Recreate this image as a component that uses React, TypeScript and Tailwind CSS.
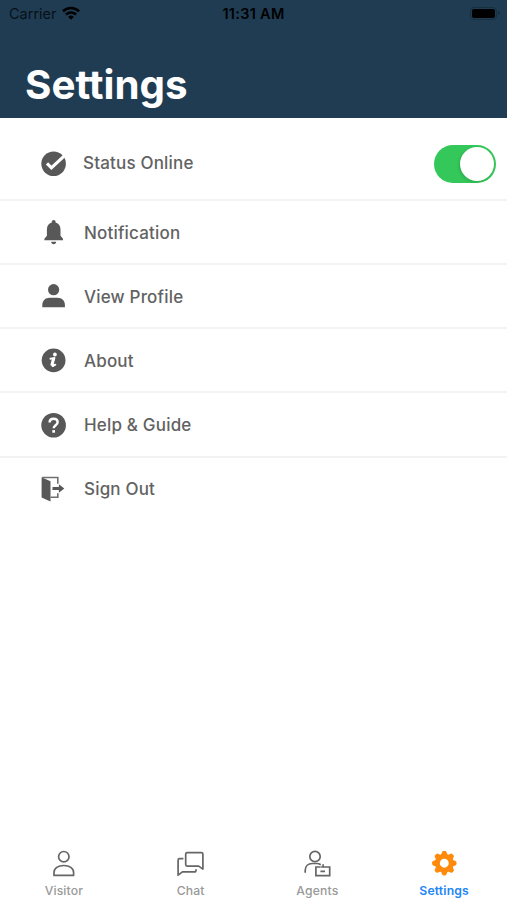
import { type ReactNode } from "react";
import clsx from "clsx";

const FONT = "font-[Inter,'Liberation_Sans',sans-serif]";

// Filled glyphs of the settings list, all on a 28px grid.
function RowIcon({ children }: { children: ReactNode }) {
  return (
    <svg viewBox="0 0 28 28" className="ml-[39.5px] size-7 shrink-0" fill="#585858" aria-hidden>
      {children}
    </svg>
  );
}

function StatusIcon() {
  return (
    <RowIcon>
      <circle cx="13.6" cy="13.7" r="12.3" />
      <path d="M7 13.4l4.400 4.400 12.900-12" fill="none" stroke="#fff" strokeWidth="3.2" />
    </RowIcon>
  );
}

function BellIcon() {
  return (
    <RowIcon>
      <path d="M13.700 2c1.100 0 1.900.8 1.900 1.900v.7c3.200.9 4.900 3.500 4.900 7v6.200l2.500 2.900v1.500H4.400v-1.500l2.500-2.900v-6.200c0-3.500 1.700-6.100 4.900-7v-.7c0-1.100.8-1.900 1.900-1.900z" />
      <path d="M11.200 23.700h5c0 1.500-1.100 2.500-2.500 2.500s-2.500-1-2.500-2.500z" />
    </RowIcon>
  );
}

function ProfileIcon() {
  return (
    <RowIcon>
      <circle cx="13.6" cy="7.700" r="5.600" />
      <path d="M2.300 25.300v-2.200c0-4.600 3.200-7.300 7.400-7.300h7.800c4.200 0 7.400 2.700 7.400 7.300v2.200z" />
    </RowIcon>
  );
}

function AboutIcon() {
  return (
    <RowIcon>
      <circle cx="13.600" cy="14.300" r="11.900" />
      <circle cx="14.900" cy="8.500" r="1.900" fill="#fff" />
      <path
        d="M10.500 12.700c1.300-.1 2.500-.4 3.900-.8l-2 7.100c-.2.900.1 1.100 1.100.7l1.800-1"
        fill="none"
        stroke="#fff"
        strokeWidth="2"
        strokeLinecap="round"
        strokeLinejoin="round"
      />
      <path d="M13.300 12.700l-1.700 6.800" stroke="#fff" strokeWidth="2.700" />
    </RowIcon>
  );
}

function HelpIcon() {
  return (
    <RowIcon>
      <circle cx="13.600" cy="14.200" r="12.300" />
      <path
        d="M9.600 11.500c0-2.400 1.600-3.800 4-3.800s4 1.300 4 3.500c0 3-3.900 3-3.900 6.100"
        fill="none"
        stroke="#fff"
        strokeWidth="2.500"
      />
      <rect x="12.300" y="19.100" width="2.700" height="2.600" fill="#fff" />
    </RowIcon>
  );
}

function SignOutIcon() {
  return (
    <RowIcon>
      <path d="M1.600 2.200l8.900 4.100v20.100l-8.900-3.800z" />
      <path d="M2.200 2.500h15.600v6.300M17.800 18.200v4h-7.300" fill="none" stroke="#707070" strokeWidth="1.600" />
      <path d="M12.500 12h6.400V9.300l5.400 4.200-5.400 4.200V15h-6.400z" />
    </RowIcon>
  );
}

// Outlined glyphs of the tab bar, on a 32px grid.
function TabIcon({ children }: { children: ReactNode }) {
  return (
    <svg
      viewBox="0 0 32 32"
      className="size-8"
      fill="none"
      stroke="#666"
      strokeWidth="1.7"
      strokeLinejoin="round"
      aria-hidden
    >
      {children}
    </svg>
  );
}

function VisitorIcon() {
  return (
    <TabIcon>
      <circle cx="16.800" cy="9.700" r="5.200" />
      <path d="M7 28.400v-2.900c0-4.300 4.100-7 9.800-7s9.800 2.700 9.800 7v2.900z" />
    </TabIcon>
  );
}

function ChatIcon() {
  return (
    <TabIcon>
      <path d="M13.200 5.700h14.200q1.500 0 1.500 1.500v14.900l-4.200-3H13.200q-1.500 0-1.500-1.500V7.200q0-1.500 1.500-1.500z" />
      <path d="M9.400 11.700H5.600q-1.500 0-1.500 1.500v15l4.300-3.300h11.800q1.800 0 1.800-1.700v-1" />
    </TabIcon>
  );
}

function AgentsIcon() {
  return (
    <TabIcon>
      <circle cx="14" cy="9.500" r="5.200" />
      <path d="M4.200 25.800v-2.400c0-4.300 3-6.900 7-6.900h4.200c1.800 0 3.200.4 4.400 1.200" />
      <path d="M19.700 20h-4.800v8.600h13.800V20h-6.400M22.100 17.200V20h-2M19.400 24.300H24" strokeLinejoin="miter" />
    </TabIcon>
  );
}

const TEETH = [0, 45, 90, 135, 180, 225, 270, 315];

function GearIcon() {
  return (
    <svg viewBox="0 0 32 32" className="size-8" aria-hidden>
      <g fill="#ff8a0c">
        {TEETH.map((a) => (
          <path
            key={a}
            d="M12.400 9.500l1.700-4.400q.3-1.100 1.300-1.100h1.800q1 0 1.300 1.100l1.700 4.400z"
            transform={`rotate(${a} 16.300 16.200)`}
          />
        ))}
      </g>
      <circle cx="16.300" cy="16.200" r="6.900" fill="none" stroke="#ff8a0c" strokeWidth="4.900" />
    </svg>
  );
}

const ROWS = [
  { label: "Notification", icon: <BellIcon />, height: "h-16" },
  { label: "View Profile", icon: <ProfileIcon />, height: "h-16" },
  { label: "About", icon: <AboutIcon />, height: "h-16" },
  { label: "Help & Guide", icon: <HelpIcon />, height: "h-[65px]" },
  { label: "Sign Out", icon: <SignOutIcon />, height: "h-[62px]" },
];

const TABS = [
  { label: "Visitor", icon: <VisitorIcon /> },
  { label: "Chat", icon: <ChatIcon /> },
  { label: "Agents", icon: <AgentsIcon /> },
  { label: "Settings", icon: <GearIcon />, active: true },
];

function StatusBar() {
  return (
    <div className="grid h-7 grid-cols-3 items-center text-black">
      <div className="flex items-center gap-[5px] pl-[9px]">
        <span className="text-[14.5px] leading-none text-[#071019]">Carrier</span>
        <svg viewBox="0 0 18 14" className="mb-[2px] h-[14px] w-[18px]" fill="none" stroke="#000" aria-hidden>
          <path d="M1 5.200a11.600 11.600 0 0 1 16 0" strokeWidth="2.600" />
          <path d="M3.900 8.500a7.500 7.500 0 0 1 10.200 0" strokeWidth="2.400" />
          <path d="M9 13.700L6.200 10.900a4 4 0 0 1 5.600 0z" fill="#000" stroke="none" />
        </svg>
      </div>
      <span className="text-center text-[14.5px] leading-none font-semibold tracking-[0.3px]">
        11:31 AM
      </span>
      <div className="flex items-center justify-end gap-px pr-[7px] pb-[2px]">
        <span className="rounded-[4px] border border-[#17303f] p-px">
          <span className="block h-[9px] w-[23px] rounded-[2px] bg-black" />
        </span>
        <span className="h-1 w-[2px] rounded-r bg-[#17303f]" />
      </div>
    </div>
  );
}

export default function App() {
  return (
    <div className={clsx("flex h-[900px] w-[507px] flex-col bg-white", FONT)}>
      <header className="h-[118px] bg-[#1f3c53]">
        <StatusBar />
        <h1 className="mt-8 ml-[25px] text-[40.3px] leading-[50px] font-bold text-white">Settings</h1>
      </header>

      <main className="flex-1 text-[17px] font-medium tracking-[0.18px] text-[#626262]">
        <div className="flex h-[83px] items-center border-b-2 border-[#f3f3f3] pt-[11px]">
          <StatusIcon />
          <span className="ml-[15.5px]">Status Online</span>
          <button
            role="switch"
            aria-checked
            aria-label="Status Online"
            className="mr-[11px] ml-auto flex h-[38px] w-[62px] items-center justify-end rounded-full bg-[#34c759] pr-[2px]"
          >
            <span className="size-[34px] rounded-full bg-white shadow-[-1px_1px_3px_rgba(0,0,0,0.15)]" />
          </button>
        </div>
        {ROWS.map((row) => (
          <div
            key={row.label}
            className={clsx(
              "group flex items-center border-b-2 border-[#f3f3f3] last:border-0",
              row.height,
            )}
          >
            {row.icon}
            <span className="ml-[16.5px] pt-[3px] group-last:pt-px">{row.label}</span>
          </div>
        ))}
      </main>

      <nav className="grid h-[53px] grid-cols-4">
        {TABS.map((tab) => (
          <button key={tab.label} className="flex flex-col items-center">
            {tab.icon}
            <span
              className={clsx(
                "mt-[4px] pl-px text-[12.2px] leading-4 tracking-[0.15px]",
                tab.active ? "pl-0 font-semibold text-[#2286f7]" : "font-medium text-[#999]",
              )}
            >
              {tab.label}
            </span>
          </button>
        ))}
      </nav>
    </div>
  );
}
